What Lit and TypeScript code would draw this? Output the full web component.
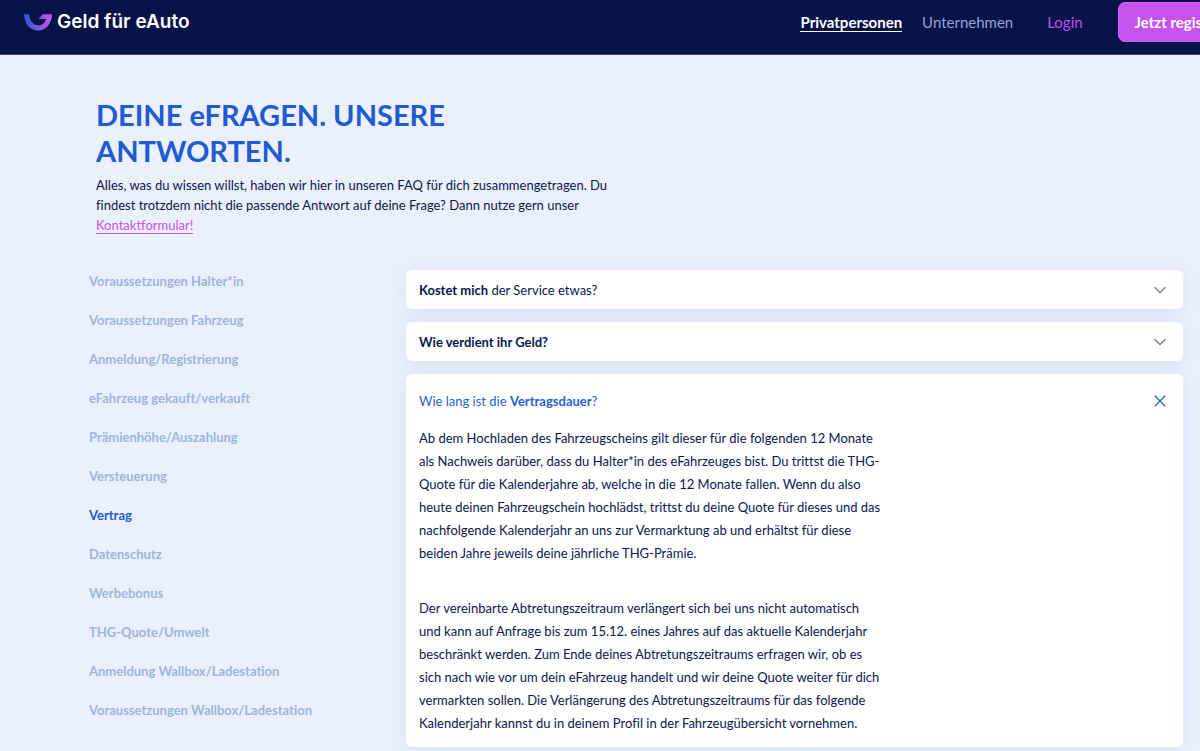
import { LitElement, html, css, svg, nothing } from "lit";
import { customElement, state } from "lit/decorators.js";

const TOPICS = [
  "Voraussetzungen Halter*in",
  "Voraussetzungen Fahrzeug",
  "Anmeldung/Registrierung",
  "eFahrzeug gekauft/verkauft",
  "Prämienhöhe/Auszahlung",
  "Versteuerung",
  "Vertrag",
  "Datenschutz",
  "Werbebonus",
  "THG-Quote/Umwelt",
  "Anmeldung Wallbox/Ladestation",
  "Voraussetzungen Wallbox/Ladestation",
];

const QUESTIONS = [
  { title: html`<b>Kostet mich</b> der Service etwas?`, answer: [] as string[] },
  { title: html`<b>Wie verdient ihr Geld?</b>`, answer: [] as string[] },
  {
    title: html`Wie lang ist die <b>Vertragsdauer</b>?`,
    answer: [
      "Ab dem Hochladen des Fahrzeugscheins gilt dieser für die folgenden 12 Monate als Nachweis darüber, dass du Halter*in des eFahrzeuges bist. Du trittst die THG-Quote für die Kalenderjahre ab, welche in die 12 Monate fallen. Wenn du also heute deinen Fahrzeugschein hochlädst, trittst du deine Quote für dieses und das nachfolgende Kalenderjahr an uns zur Vermarktung ab und erhältst für diese beiden Jahre jeweils deine jährliche THG-Prämie.",
      "Der vereinbarte Abtretungszeitraum verlängert sich bei uns nicht automatisch und kann auf Anfrage bis zum 15.12. eines Jahres auf das aktuelle Kalenderjahr beschränkt werden. Zum Ende deines Abtretungszeitraums erfragen wir, ob es sich nach wie vor um dein eFahrzeug handelt und wir deine Quote weiter für dich vermarkten sollen. Die Verlängerung des Abtretungszeitraums für das folgende Kalenderjahr kannst du in deinem Profil in der Fahrzeugübersicht vornehmen.",
    ],
  },
];

@customElement("site-header")
class SiteHeader extends LitElement {
  static styles = css`
    :host {
      display: block;
      background: #061348;
      border-bottom: 1px solid #3b4672;
      overflow: hidden;
    }
    .bar {
      display: flex;
      align-items: center;
      justify-content: space-between;
      height: 44px;
      padding: 0 0 10px 24px;
    }
    a {
      text-decoration: none;
    }
    .brand {
      display: flex;
      align-items: center;
      gap: 5px;
      color: #fff;
      font: 600 19px/24px Inter, Lato, sans-serif;
    }
    .nav {
      display: flex;
      align-items: center;
      flex: none;
      font-size: 15px;
      line-height: 18px;
      white-space: nowrap;
      margin-right: -64px;
    }
    .link {
      color: #8fa5d6;
      margin-right: 20px;
      border-bottom: 1px solid transparent;
    }
    .current {
      color: #fff;
      font-weight: 700;
      border-color: #fff;
    }
    .login {
      color: #c44fec;
      margin: 0 35px 0 14px;
    }
    .cta {
      font: inherit;
      font-weight: 700;
      color: #fff;
      background: #c653ee;
      border: 1px solid #d05ff5;
      border-radius: 7px;
      height: 40px;
      padding: 0 16px;
    }
  `;
  render() {
    return html`<header class="bar">
      <a class="brand" href="#">
        <svg width="28" height="17" viewBox="0 0 28 17" aria-hidden="true">
          <defs>
            <linearGradient id="g" x1="0" x2="1" y1="0" y2="0">
              <stop offset="0" stop-color="#2a5bd7" />
              <stop offset="0.5" stop-color="#7a55e0" />
              <stop offset="1" stop-color="#cb55ee" />
            </linearGradient>
          </defs>
          <path
            fill="url(#g)"
            d="M0 0.3H5C5.4 6.5 9.2 11.3 14.2 11.3C18 11.3 20.8 9 22 5H14.6L18.5 0.3H28C27.8 9.8 22 16.5 14.2 16.5C6 16.5 0.3 10 0 0.3Z"
          />
        </svg>
        <span>Geld für eAuto</span>
      </a>
      <nav class="nav">
        <a class="link current" href="#">Privatpersonen</a>
        <a class="link" href="#">Unternehmen</a>
        <a class="login" href="#">Login</a>
        <button class="cta">Jetzt registrieren</button>
      </nav>
    </header>`;
  }
}

@customElement("app-root")
class AppRoot extends LitElement {
  static styles = css`
    :host {
      display: block;
      min-height: 100vh;
      background: #ebf0fd;
      color: #0b1650;
      font: 13px/20px Lato, "Open Sans", sans-serif;
      font-variant-ligatures: none;
    }
    .intro {
      max-width: 520px;
      padding: 42px 96px 0;
    }
    h1 {
      margin: 0 0 6px;
      max-width: 400px;
      color: #215ad3;
      font-size: 29px;
      line-height: 36px;
      font-weight: 700;
    }
    .lead {
      margin: 0;
    }
    .contact {
      color: #c653ee;
      text-decoration: none;
      border-bottom: 1px solid #c653ee;
    }
    .faq {
      display: grid;
      grid-template-columns: 300px 1fr;
      gap: 17px;
      align-items: start;
      padding: 35px 17px 4px 89px;
    }
    .topics {
      list-style: none;
      margin: 0;
      padding: 1px 0 0;
    }
    .topic {
      display: block;
      margin-bottom: 19px;
      color: #9fb3df;
      font-weight: 700;
      text-decoration: none;
    }
    .active {
      color: #215ad3;
    }
    .list {
      display: grid;
      gap: 13px;
    }
    .card {
      background: #fff;
      border-radius: 6px;
      box-shadow: 0 2px 20px rgba(33, 90, 180, 0.1);
    }
    h2 {
      margin: 0;
      font: inherit;
    }
    .question {
      display: flex;
      align-items: center;
      justify-content: space-between;
      box-sizing: border-box;
      width: 100%;
      min-height: 39px;
      padding: 0 17px 0 13px;
      border: 0;
      background: none;
      color: inherit;
      font: inherit;
      font-variant-ligatures: none;
      text-align: left;
      cursor: pointer;
    }
    .icon {
      fill: none;
      stroke: #777;
    }
    .open .question {
      min-height: 53px;
      color: #2a5fd6;
    }
    .open .icon {
      stroke: #2a5fd6;
    }
    .answer {
      max-width: 465px;
      padding: 0 13px 12px;
      line-height: 23px;
    }
    .answer p {
      margin: 0 0 32px;
    }
    .answer p:last-child {
      margin: 0;
    }
  `;

  @state() private topic = "Vertrag";
  @state() private open = 2;

  private icon(open: boolean) {
    return html`<svg class="icon" width="12" height="12" viewBox="0 0 12 12" aria-hidden="true">
      ${open
        ? svg`<path stroke-width="1.3" d="M0.8 0.8L11.2 11.2M11.2 0.8L0.8 11.2" />`
        : svg`<path stroke-width="1.3" d="M0.6 3.3L6 8.6L11.4 3.3" />`}
    </svg>`;
  }

  render() {
    return html`
      <site-header></site-header>
      <main>
        <section class="intro">
          <h1>DEINE eFRAGEN. UNSERE ANTWORTEN.</h1>
          <p class="lead">
            Alles, was du wissen willst, haben wir hier in unseren FAQ für dich zusammengetragen. Du findest trotzdem
            nicht die passende Antwort auf deine Frage? Dann nutze gern unser
            <a class="contact" href="#">Kontaktformular!</a>
          </p>
        </section>
        <section class="faq">
          <ul class="topics">
            ${TOPICS.map(
              (t) => html`<li>
                <a class="topic ${t === this.topic ? "active" : ""}" href="#" @click=${() => (this.topic = t)}>${t}</a>
              </li>`,
            )}
          </ul>
          <div class="list">
            ${QUESTIONS.map((q, i) => {
              const open = this.open === i;
              return html`<article class="card ${open ? "open" : ""}">
                <h2>
                  <button class="question" aria-expanded=${open} @click=${() => (this.open = open ? -1 : i)}>
                    <span>${q.title}</span>${this.icon(open)}
                  </button>
                </h2>
                ${open ? html`<div class="answer">${q.answer.map((p) => html`<p>${p}</p>`)}</div>` : nothing}
              </article>`;
            })}
          </div>
        </section>
      </main>
    `;
  }
}
